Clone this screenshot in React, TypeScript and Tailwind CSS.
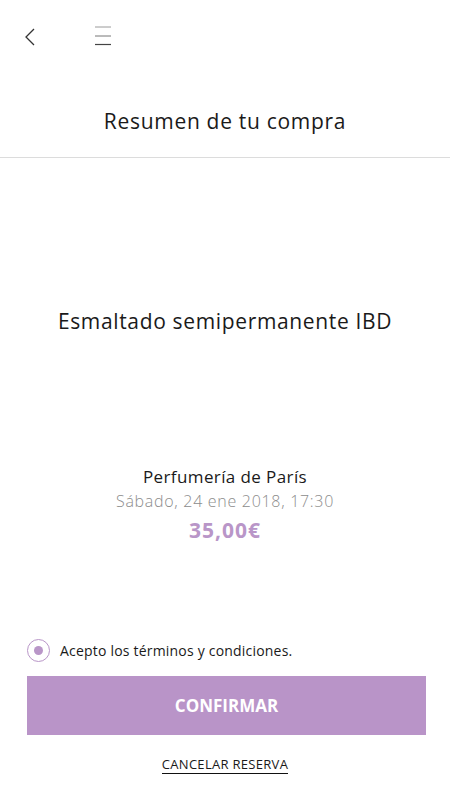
import React from 'react';

export default function App() {
  return (
    <div
      className="w-[450px] h-[800px] bg-white flex flex-col text-[#1a1a1a]"
      style={{ fontFamily: '"Open Sans", Lato, sans-serif' }}
    >
      <div className="h-[72px] flex items-center pl-[24px]">
        <svg width="12" height="18" viewBox="0 0 12 18" fill="none" className="mt-[1px]">
          <path d="M10 1 L2 9 L10 17" stroke="#333" strokeWidth="1.3" />
        </svg>
        <svg width="16" height="20" viewBox="0 0 16 20" className="ml-[59px]">
          <line x1="0" y1="1" x2="16" y2="1" stroke="#9a9a9a" strokeWidth="1" />
          <line x1="0" y1="10" x2="16" y2="10" stroke="#777" strokeWidth="1" />
          <line x1="0" y1="18.5" x2="16" y2="18.5" stroke="#444" strokeWidth="1.2" />
        </svg>
      </div>

      <div className="h-[86px] flex items-center justify-center border-b border-[#dcdcdc]">
        <h1 className="text-[21px] leading-7 pt-[12px] tracking-[0.7px]">Resumen de tu compra</h1>
      </div>

      <div className="flex flex-col items-center">
        <h2 className="mt-[149px] text-[21px] leading-7 tracking-[0.65px]">Esmaltado semipermanente IBD</h2>
        <p className="mt-[130px] text-[17px] leading-6 tracking-[0.4px]">Perfumería de París</p>
        <p className="text-[16px] leading-6 font-light text-[#8c8c8c] tracking-[0.7px]">
          Sábado, 24 ene 2018, 17:30
        </p>
        <p className="mt-[3px] text-[21px] leading-7 font-bold text-[#b996c8] tracking-[1px]">35,00€</p>
      </div>

      <div className="mt-[94px] px-[27px] flex items-center gap-[10px] h-6">
        <span className="w-[23px] h-[23px] rounded-full border border-[#b996c8] flex items-center justify-center">
          <span className="w-[9px] h-[9px] rounded-full bg-[#b996c8]" />
        </span>
        <span className="text-[14px] tracking-[0.2px]">Acepto los términos y condiciones.</span>
      </div>

      <div className="mt-[14px] pl-[27px]">
        <button className="w-[399px] h-[59px] bg-[#b994c8] text-white font-bold text-[17px]">
          CONFIRMAR
        </button>
      </div>

      <div className="mt-[20px] flex justify-center">
        <span className="text-[13px] leading-[18px] border-b border-[#111] tracking-[0.3px]">
          CANCELAR RESERVA
        </span>
      </div>
    </div>
  );
}
